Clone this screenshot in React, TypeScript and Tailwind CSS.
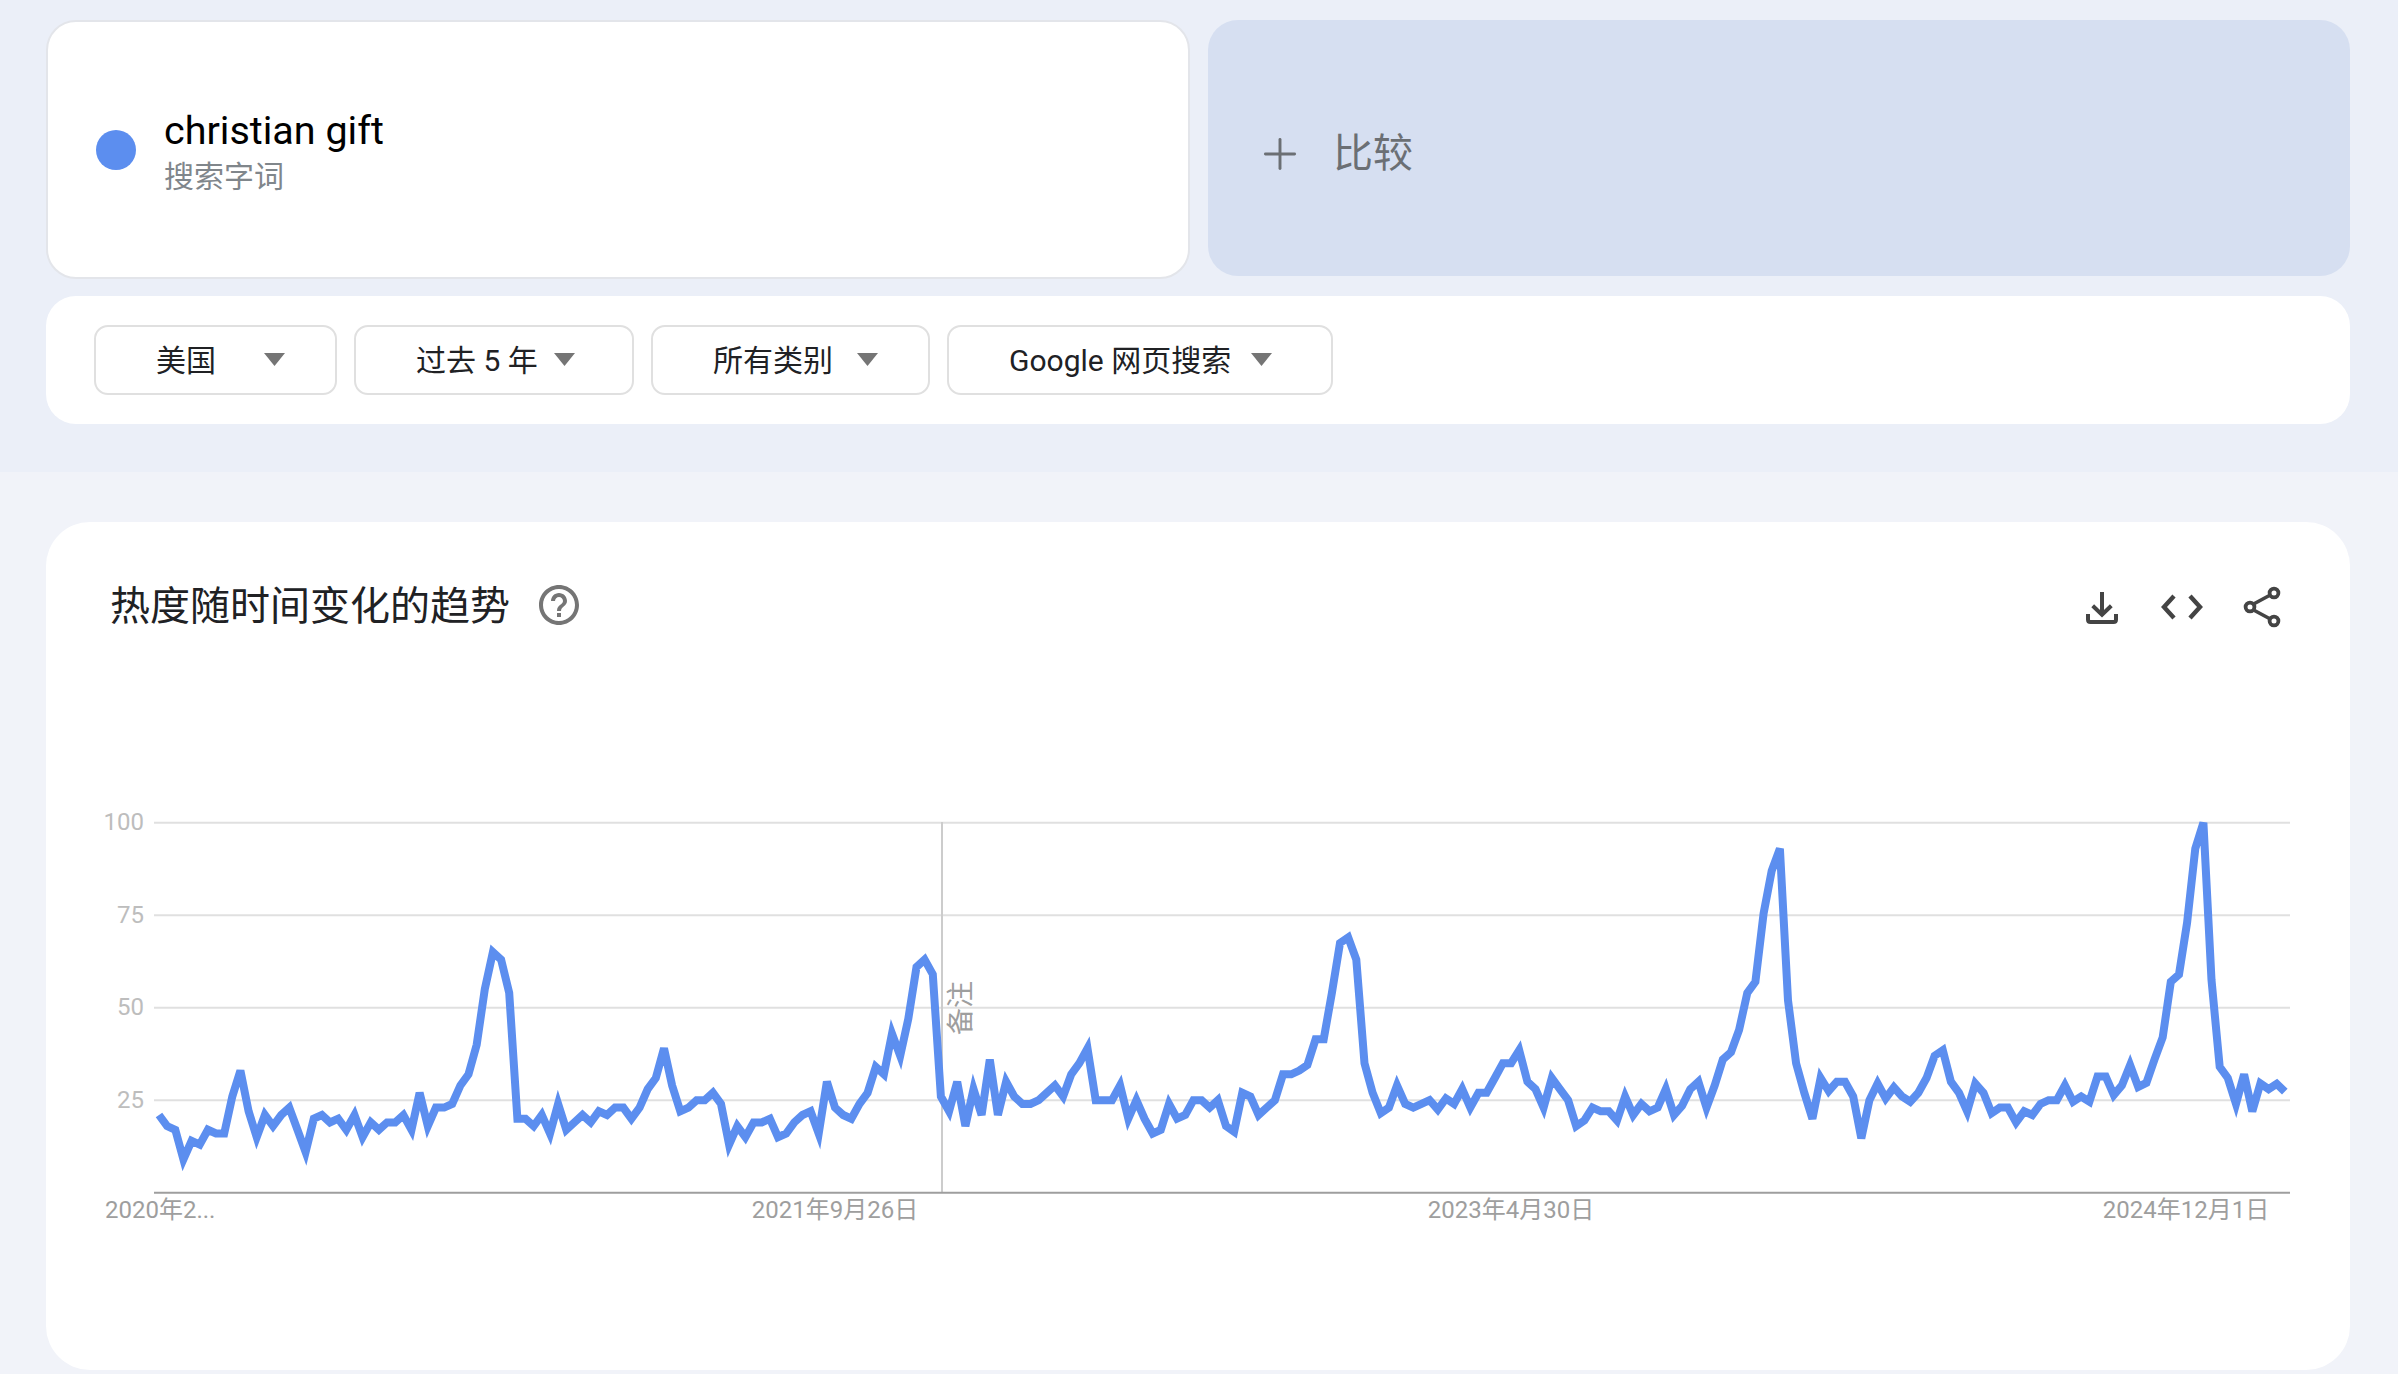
import React from 'react';
import { Plus } from 'lucide-react';

// search interest, one value per week
const trend = [
    21, 18, 17, 9, 14, 13, 17, 16, 16, 26, 33, 22, 15, 21, 18, 21, 23, 17, 11, 20,
    21, 19, 20, 17, 21, 15, 19, 17, 19, 19, 21, 17, 27, 18, 23, 23, 24, 29, 32, 40,
    55, 65, 63, 54, 20, 20, 18, 21, 16, 24, 17, 19, 21, 19, 22, 21, 23,
    23, 20, 23, 28, 31, 39, 29, 22, 23, 25, 25, 27, 24, 13, 18, 15, 19, 19, 20, 15,
    16, 19, 21, 22, 16, 30, 23, 21, 20, 24, 27, 34, 32, 43, 37, 47, 61, 63, 59, 26,
    22, 30, 18, 28, 21, 36, 21, 30, 26, 24, 24, 25, 27, 29, 26, 32, 35, 39, 25, 25,
    25, 29, 20, 25, 20, 16, 17, 24, 20, 21, 25, 25, 23, 25,
    18, 16.5, 27, 26, 21, 23, 25, 32, 32, 33, 34.5, 41.5, 41.5, 54, 67.5, 69, 63, 35, 27, 21.5,
    23, 29, 24, 23, 24, 25, 22.5, 25.5, 24, 28, 23, 27, 27, 31, 35, 35, 38.5, 30, 28, 23,
    31, 28, 25, 18, 19.5, 23, 22, 22, 19.5, 26, 21, 24, 22, 23, 28, 21, 23.5, 28, 30, 23,
    29, 36, 38, 44, 54, 57, 75.5, 87, 93, 52, 35, 27, 20, 31,
    27.5, 30, 30, 26, 14.7, 25, 29.5, 25.5, 28.5, 26, 24.6, 27, 31, 37, 38.5, 30, 27, 22, 29.5, 27,
    21.5, 23, 23, 19, 22, 21, 24, 25, 25, 29, 24.6, 26, 24.6, 31.4, 31.4, 26.4, 29, 34.5, 28.6, 29.7,
    36, 42, 57, 59, 73, 93, 100, 57.5, 34, 31, 24, 32, 22, 29.5, 28, 29.4, 27.3,
];

const yFor = (v: number) => 1192.7 - v * 3.7;
const linePoints = trend.map((v, i) => `${(159 + i * 8.145).toFixed(1)},${yFor(v).toFixed(1)}`).join(' ');

const filters = [
    { label: '美国', box: 'w-[243px]', gap: 'ml-[48px]' },
    { label: '过去 5 年', box: 'w-[280px]', gap: 'ml-[16px]' },
    { label: '所有类别', box: 'w-[279px]', gap: 'ml-[24px]' },
    { label: 'Google 网页搜索', box: 'w-[386px]', gap: 'ml-[20px]' },
];

function Filter({ label, box, gap }: { label: string; box: string; gap: string }) {
    return (
        <div className={`${box} h-[70px] flex items-center pl-[60px] border-2 border-[#e0e0e0] rounded-[14px] text-[30px] text-[#202124]`}>
            <span>{label}</span>
            <svg viewBox="0 0 21 13" className={`${gap} w-[21px] h-[13px] -mt-[2px]`}>
                <path d="M0 0H21L10.5 13Z" fill="#757575" />
            </svg>
        </div>
    );
}

function Chart() {
    return (
        <svg viewBox="46 780 2304 480" className="block w-[2304px] h-[480px]">
            {[100, 75, 50, 25].map((v) => (
                <g key={v}>
                    <line x1="154" x2="2290" y1={yFor(v)} y2={yFor(v)} stroke="#e0e0e0" strokeWidth="2" />
                    <text x="144" y={yFor(v) + 7.5} textAnchor="end" fontSize="24" fill="#bdbdbd">{v}</text>
                </g>
            ))}
            <line x1="942" x2="942" y1="822" y2="1192" stroke="#cccccc" strokeWidth="2" />
            <line x1="154" x2="2290" y1="1192.7" y2="1192.7" stroke="#9e9e9e" strokeWidth="2" />
            <text transform="translate(970 1035) rotate(-90)" fontSize="27" fill="#9e9e9e">备注</text>
            <polyline points={linePoints} fill="none" stroke="#5c8eef" strokeWidth="8" strokeLinejoin="miter" />
            <text x="105" y="1218" fontSize="24" fill="#9e9e9e">2020年2...</text>
            <text x="835" y="1218" textAnchor="middle" fontSize="24" fill="#9e9e9e">2021年9月26日</text>
            <text x="1511" y="1218" textAnchor="middle" fontSize="24" fill="#9e9e9e">2023年4月30日</text>
            <text x="2186" y="1218" textAnchor="middle" fontSize="24" fill="#9e9e9e">2024年12月1日</text>
        </svg>
    );
}

export default function App() {
    return (
        <div className="w-full h-[1374px] overflow-hidden bg-[#f1f3f9] font-[family-name:Roboto,'Noto_Sans_CJK_SC',sans-serif]">
            <div className="h-[472px] bg-[#ebeff8] pl-[46px] pr-[48px] pt-[20px]">
                <div className="grid grid-cols-[1144px_1142px] gap-[18px] items-start">
                    <div className="h-[259px] flex items-center pl-[48px] bg-white border-2 border-[#e3e5ea] rounded-[30px]">
                        <div className="w-[40px] h-[40px] rounded-full bg-[#5c8eef]" />
                        <div className="ml-[28px] mt-[6px] flex flex-col">
                            <span className="text-[39.5px] leading-[48px] text-black">christian gift</span>
                            <span className="text-[30px] leading-[44px] text-[#80868b]">搜索字词</span>
                        </div>
                    </div>
                    <div className="h-[256px] flex items-center pl-[47px] pt-[12px] bg-[#d6dff1] rounded-[30px]">
                        <Plus className="w-[50px] h-[50px] text-[#6b6f74]" strokeWidth={1.4} />
                        <span className="ml-[28px] text-[40px] text-[#6b6f74]">比较</span>
                    </div>
                </div>
                <div className="mt-[17px] h-[128px] flex items-center gap-[17px] pl-[48px] bg-white rounded-[30px]">
                    {filters.map((f) => (
                        <Filter key={f.label} {...f} />
                    ))}
                </div>
            </div>
            <div className="pl-[46px] pr-[48px] pt-[50px]">
                <div className="h-[848px] bg-white rounded-[44px]">
                    <div className="h-[170px] flex items-center pl-[64px] pr-[64px]">
                        <h1 className="text-[40px] font-normal text-[#202124]">热度随时间变化的趋势</h1>
                        <svg viewBox="0 0 24 24" className="ml-[25px] w-[48px] h-[48px] -mt-[4px]" fill="#757575">
                            <path d="M11 18h2v-2h-2v2zm1-16C6.48 2 2 6.48 2 12s4.48 10 10 10 10-4.48 10-10S17.52 2 12 2zm0 18c-4.41 0-8-3.59-8-8s3.59-8 8-8 8 3.59 8 8-3.59 8-8 8zm0-14c-2.21 0-4 1.79-4 4h2c0-1.1.9-2 2-2s2 .9 2 2c0 2-3 1.75-3 5h2c0-2.25 3-2.5 3-5 0-2.21-1.79-4-4-4z" />
                        </svg>
                        <div className="ml-auto flex items-center gap-[32px] text-[#444444]">
                            <svg viewBox="-8 -8 48 48" className="w-[48px] h-[48px] mt-[2px]" fill="none" stroke="currentColor" strokeWidth="4">
                                <path d="M16 0V22M6.7 13.7L16 22.7L25.3 13.7" />
                                <path d="M2 22V27.5Q2 30 4.5 30H27.5Q30 30 30 27.5V22" />
                            </svg>
                            <svg viewBox="0 0 48 48" className="w-[48px] h-[48px] -mt-[1px]" fill="none" stroke="currentColor" strokeWidth="4.4">
                                <path d="M16 13L6 24L16 35M32 13L42 24L32 35" />
                            </svg>
                            <svg viewBox="0 0 48 48" className="w-[48px] h-[48px] -mt-[1px]" fill="none" stroke="currentColor">
                                <path d="M10 24L36 10M10 24L36 38" strokeWidth="3.6" />
                                <circle cx="36" cy="10" r="4.4" fill="#fff" strokeWidth="3.8" />
                                <circle cx="12" cy="24" r="4.4" fill="#fff" strokeWidth="3.8" />
                                <circle cx="36" cy="38" r="4.4" fill="#fff" strokeWidth="3.8" />
                            </svg>
                        </div>
                    </div>
                    <div className="mt-[88px]">
                        <Chart />
                    </div>
                </div>
            </div>
        </div>
    );
}
